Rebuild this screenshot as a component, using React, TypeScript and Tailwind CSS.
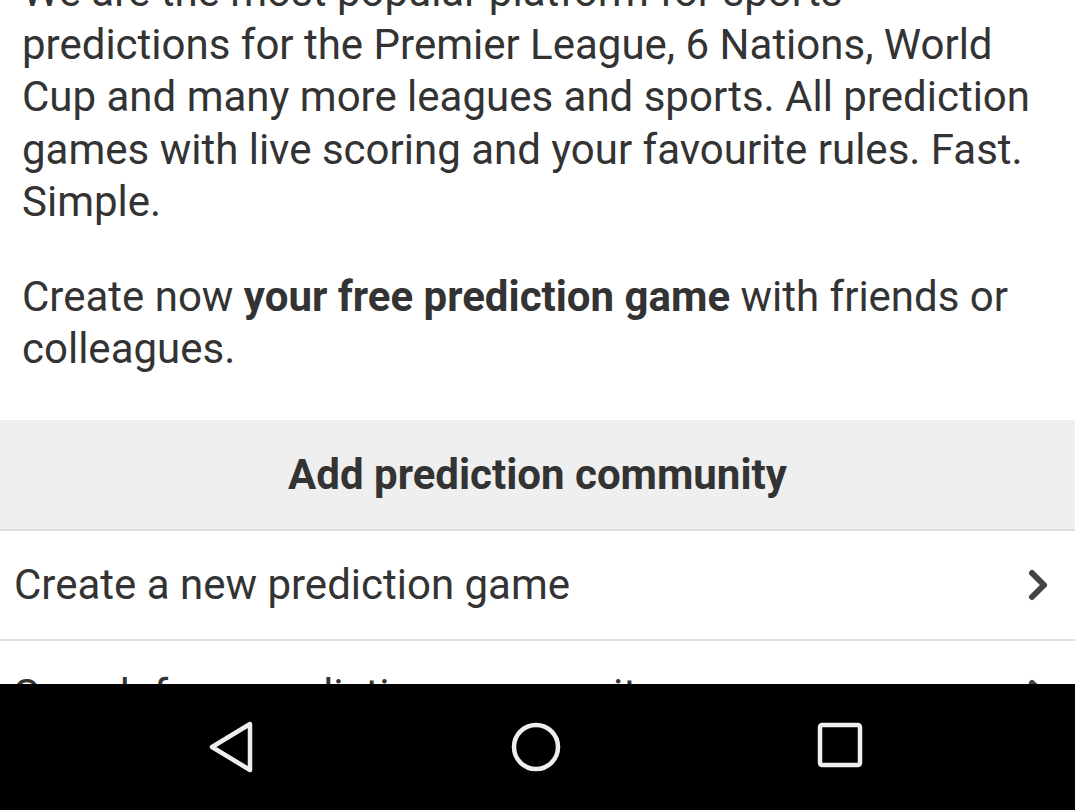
import { ChevronRight } from 'lucide-react';

const rows = ['Create a new prediction game', 'Search for a prediction community'];

export default function App() {
  return (
    <div className="h-[810px] w-full flex flex-col bg-white overflow-hidden" style={{ fontFamily: 'Roboto, "Noto Sans", sans-serif' }}>
      {/* Content */}
      <div className="flex-1 overflow-hidden">
        <div className="-mt-[34px] pl-[22px] pr-[20px] text-[42px] leading-[52.5px] text-[#333333]">
          <p>
            We are the most popular platform for sports predictions for the Premier League, 6 Nations, World
            Cup and many more leagues and sports. All prediction games with live scoring and your favourite rules. Fast.
            Simple.
          </p>
          <p className="mt-[42px]">
            Create now <span className="font-bold">your free prediction game</span> with friends or colleagues.
          </p>
        </div>

        <div className="mt-[44px] h-[111px] bg-[#efefef] flex items-center justify-center border-b-2 border-[#dedede]">
          <h2 className="text-[42px] font-bold text-[#333333]">Add prediction community</h2>
        </div>

        {rows.map((row) => (
          <div key={row} className="h-[110px] flex items-center justify-between pl-[14px] pr-[13px] border-b-2 border-[#dedede]">
            <span className="text-[42px] text-[#333333]">{row}</span>
            <ChevronRight size={48} strokeWidth={3} className="text-[#444444]" />
          </div>
        ))}
      </div>

      {/* Android nav bar */}
      <div className="h-[126px] bg-black flex items-center">
        <div className="w-full flex justify-between pl-[206px] pr-[210px]">
          <svg width="50" height="54" viewBox="0 0 50 54">
            <path d="M44 4 L6 27 L44 50 Z" fill="none" stroke="#eeeeee" strokeWidth="4.5" strokeLinejoin="round" />
          </svg>
          <svg width="54" height="54" viewBox="0 0 54 54">
            <circle cx="27" cy="27" r="22" fill="none" stroke="#eeeeee" strokeWidth="4.5" />
          </svg>
          <svg width="50" height="50" viewBox="0 0 50 50">
            <rect x="5" y="5" width="40" height="40" rx="2" fill="none" stroke="#eeeeee" strokeWidth="4.5" />
          </svg>
        </div>
      </div>
    </div>
  );
}
